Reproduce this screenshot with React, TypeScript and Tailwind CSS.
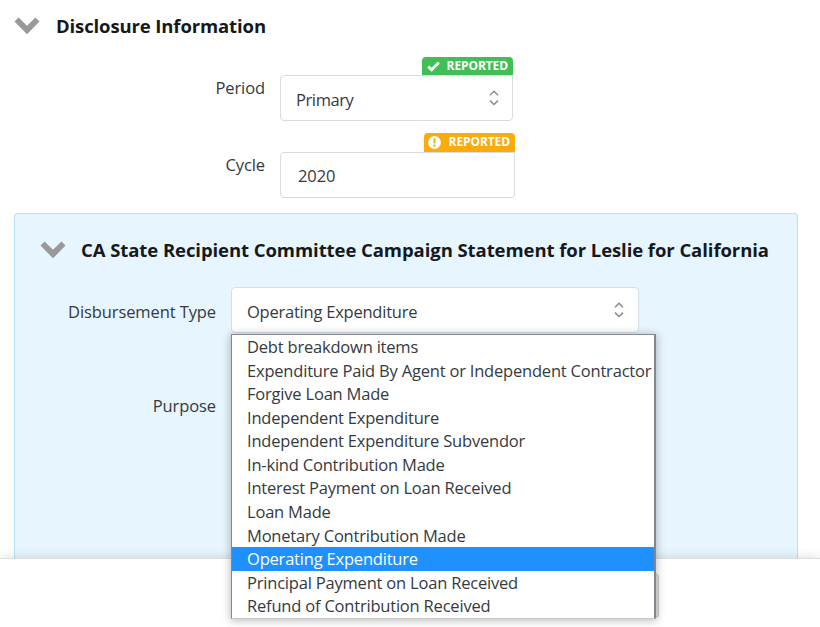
import React, { useState } from 'react';

const disbursementTypes = [
  'Debt breakdown items',
  'Expenditure Paid By Agent or Independent Contractor',
  'Forgive Loan Made',
  'Independent Expenditure',
  'Independent Expenditure Subvendor',
  'In-kind Contribution Made',
  'Interest Payment on Loan Received',
  'Loan Made',
  'Monetary Contribution Made',
  'Operating Expenditure',
  'Principal Payment on Loan Received',
  'Refund of Contribution Received',
];

function SectionChevron() {
  return (
    <svg className="shrink-0" width="26" height="18" viewBox="0 0 26 18" fill="#999999">
      <path d="M0.5 4.6 4.6 0.5 13 8.7 21.4 0.5 25.5 4.6 13 17.3z" />
    </svg>
  );
}

function SelectArrows() {
  return (
    <svg className="shrink-0" width="10" height="16" viewBox="0 0 10 16" fill="none" stroke="#8c8c8c" strokeWidth="1.5">
      <path d="M1 5.2 5 1.3 9 5.2" />
      <path d="M1 10.6 5 14.5 9 10.6" />
    </svg>
  );
}

function CheckIcon() {
  return (
    <svg className="mt-[3px]" width="13" height="11" viewBox="0 0 13 11" fill="none" stroke="#fff" strokeWidth="2.8">
      <path d="M1.2 5.4 4.7 8.8 11.8 1.6" />
    </svg>
  );
}

function WarningIcon() {
  return (
    <svg className="mt-[2px]" width="13" height="13" viewBox="0 0 13 13">
      <circle cx="6.5" cy="6.5" r="6.4" fill="#fff" />
      <path d="M5.3 2.4h2.4l-.4 5H5.7z" fill="#fbab0b" />
      <circle cx="6.5" cy="9.6" r="1.2" fill="#fbab0b" />
    </svg>
  );
}

function App() {
  const [selected, setSelected] = useState('Operating Expenditure');

  return (
    <div className="w-[820px] h-[627px] bg-white overflow-hidden text-[16.5px] tracking-[-0.1px] text-[#343a40] font-['Open_Sans',sans-serif]">
      <div className="h-[558px] flex flex-col">
        <div className="h-[52px] shrink-0 pl-[14px] flex items-center">
          <SectionChevron />
          <h2 className="ml-4 text-[18.5px] tracking-[-0.12px] font-bold text-[#16191c] whitespace-nowrap">
            Disclosure Information
          </h2>
        </div>

        {/* Period */}
        <div className="h-[74px] shrink-0 flex pt-[5px]">
          <label className="w-[265px] mr-[15px] pt-[19px] text-right leading-6">Period</label>
          <div className="w-[233px] flex flex-col items-end">
            <div className="w-[91px] h-[18px] pl-[5px] pr-[5px] flex justify-between bg-[#40bf57] rounded-t text-white">
              <span className="pt-px"><CheckIcon /></span>
              <span className="text-[12px] leading-[17px] font-bold">REPORTED</span>
            </div>
            <div className="w-full h-[46px] pl-[15px] pr-[13px] flex items-center justify-between border border-[#d9dbdf] rounded rounded-tr-none">
              <span className="pt-1 tracking-[-0.4px]">Primary</span>
              <SelectArrows />
            </div>
          </div>
        </div>

        {/* Cycle */}
        <div className="h-[87px] shrink-0 flex pt-[7px]">
          <label className="w-[265px] mr-[15px] pt-5 text-right leading-6">Cycle</label>
          <div className="w-[235px] flex flex-col items-end">
            <div className="w-[91px] h-[19px] pl-[4px] pr-[5px] flex justify-between bg-[#fbab0b] rounded-t text-white">
              <span className="pt-px"><WarningIcon /></span>
              <span className="pt-px text-[12px] leading-4 font-bold">REPORTED</span>
            </div>
            <div className="w-full h-[46px] pl-[17px] pt-[3px] flex items-center border border-[#d9dbdf] rounded rounded-tr-none">2020</div>
          </div>
        </div>

        {/* Committee statement */}
        <div className="flex-1 ml-[14px] mr-[22px] bg-[#e6f5fe] border border-b-0 border-[#b8e2f3] rounded-t">
          <div className="h-[73px] pl-[25px] pb-[2px] flex items-center">
            <SectionChevron />
            <h2 className="ml-[15px] text-[18.5px] tracking-[-0.07px] font-bold text-[#16191c] whitespace-nowrap">
              CA State Recipient Committee Campaign Statement for Leslie for California
            </h2>
          </div>
          <div className="flex h-[95px]">
            <label className="w-[201px] mr-[15px] pt-[13px] text-right leading-6 whitespace-nowrap">Disbursement Type</label>
            <div className="relative w-[408px] h-[46px]">
              <div className="h-full pl-[15px] pr-[14px] flex items-center justify-between bg-white border border-[#d6dfe5] rounded">
                <span className="pt-1 tracking-[-0.23px]">{selected}</span>
                <SelectArrows />
              </div>
              <ul className="absolute z-20 left-0 top-[47px] w-[425px] h-[285px] tracking-[-0.2px] bg-white border border-r-2 border-[#828790] border-b-[#c9c9c9] shadow-[0_1px_8px_1px_rgba(0,0,0,0.25)]">
                {disbursementTypes.map((type) => (
                  <li
                    key={type}
                    onClick={() => setSelected(type)}
                    className={`h-[23.58px] pl-[15px] leading-[23.58px] whitespace-nowrap ${
                      type === selected ? 'bg-[#1e90ff] text-white' : ''
                    }`}
                  >
                    {type}
                  </li>
                ))}
              </ul>
            </div>
          </div>
          <div className="flex">
            <label className="w-[201px] pt-[12px] text-right leading-6">Purpose</label>
          </div>
        </div>
      </div>

      <footer className="relative z-10 h-[69px] pt-[14px] pl-[520px] bg-white border-t border-[#dcdfe1] shadow-[0_-1px_10px_rgba(0,0,0,0.12)]">
        <div className="w-[139px] h-[45px] bg-[#e4e4e4] border border-[#c9c9c9] rounded" />
      </footer>
    </div>
  );
}

export default App;
